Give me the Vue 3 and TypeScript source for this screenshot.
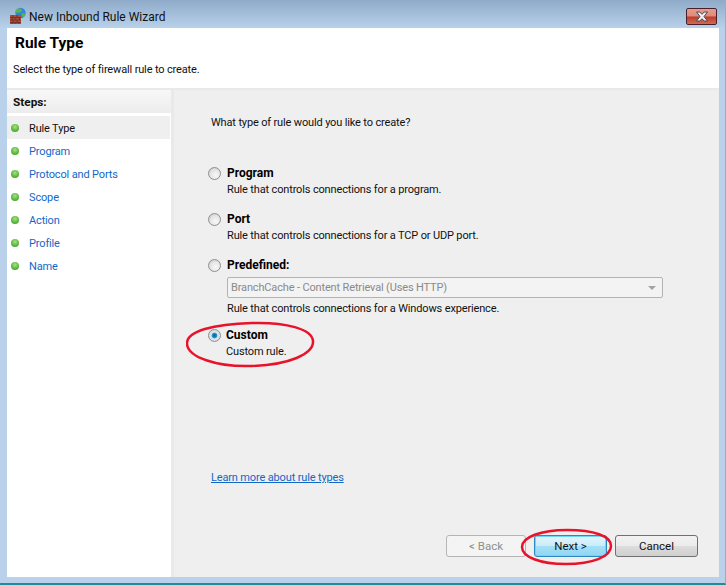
<template>
  <div class="window">
    <div class="titlebar">
      <svg class="app-icon" width="18" height="18" viewBox="0 0 18 18">
        <circle cx="11.5" cy="6" r="5.2" fill="#2f86d8" />
        <path d="M8 2.5c2-1.6 4.5-1 5 .5s-1.5 2.5-3 2.5-3 1-3.5-.5.5-1.8 1.500-2.500zM13 6.500c1.500-.5 3 0 3 1s-1 2.500-2 2.500-2-2.500-1-3.500z" fill="#5cb54a" />
        <path d="M1 8h11v9H1z" fill="#a8503c" />
        <path d="M1 10.500h11M1 13h11M1 15.500h11M4 8v2.500M8 8v2.500M10.500 10.500V13M6 10.500V13M3 10.500V13M4 13v2.500M8 13v2.500M3 15.500V17M6 15.500V17M10 15.500V17" stroke="#6e2a22" stroke-width="0.8" fill="none" />
      </svg>
      <span class="title-text">New Inbound Rule Wizard</span>
      <button class="close-btn" aria-label="Close">
        <svg width="14" height="11" viewBox="0 0 14 11">
          <path d="M1.500 1h3.300L7 3.300 9.200 1h3.300L9 5.500l3.500 4.500H9.200L7 7.700 4.800 10H1.500L5 5.500z" fill="#eef0f6" stroke="#4a4a55" stroke-width="1" />
        </svg>
      </button>
    </div>

    <div class="client">
      <header class="head">
        <h1>Rule Type</h1>
        <p>Select the type of firewall rule to create.</p>
      </header>

      <div class="main">
        <aside class="steps">
          <div class="steps-title">Steps:</div>
          <ul>
            <li v-for="(s, i) in steps" :key="s" :class="{ current: i === 0 }">
              <span class="dot"></span>
              <span class="step-label">{{ s }}</span>
            </li>
          </ul>
        </aside>

        <section class="content">
          <p class="question">What type of rule would you like to create?</p>

          <div class="options">
            <div v-for="o in options" :key="o.name" class="option" :class="o.cls">
              <span class="radio" :class="{ checked: o.checked }"></span>
              <div class="option-body">
                <div class="option-name">{{ o.name }}</div>
                <div v-if="o.select" class="select">
                  <span>{{ o.select }}</span>
                  <i class="arrow"></i>
                </div>
                <div class="option-desc">{{ o.desc }}</div>
              </div>
            </div>
            <svg class="ring ring-custom" width="131" height="49" viewBox="0 0 131 49">
              <path d="M66 3C100 2 126 9 127 21c1 13-24 24-62 25C30 47 2 37 1 24 0 11 28 4 66 3z" fill="none" stroke="#e8132a" stroke-width="2.500" />
            </svg>
          </div>

          <a class="learn">Learn more about rule types</a>

          <div class="buttons">
            <button class="btn" disabled>&lt; Back</button>
            <button class="btn primary">Next &gt;</button>
            <button class="btn cancel">Cancel</button>
            <svg class="ring ring-next" width="94" height="38" viewBox="0 0 94 38">
              <path d="M47 2C74 2 91 8 91 18c0 11-19 18-45 18C20 36 2 29 2 19 2 9 21 2 47 2z" fill="none" stroke="#e8132a" stroke-width="2.500" />
            </svg>
          </div>
        </section>
      </div>
    </div>
  </div>
</template>

<script setup lang="ts">
const steps = ['Rule Type', 'Program', 'Protocol and Ports', 'Scope', 'Action', 'Profile', 'Name']

interface RuleOption {
  name: string
  desc: string
  cls: string
  select?: string
  checked?: boolean
}

const options: RuleOption[] = [
  { name: 'Program', desc: 'Rule that controls connections for a program.', cls: 'opt-program' },
  { name: 'Port', desc: 'Rule that controls connections for a TCP or UDP port.', cls: 'opt-port' },
  {
    name: 'Predefined:',
    desc: 'Rule that controls connections for a Windows experience.',
    cls: 'opt-predefined',
    select: 'BranchCache - Content Retrieval (Uses HTTP)'
  },
  { name: 'Custom', desc: 'Custom rule.', cls: 'opt-custom', checked: true }
]
</script>

<style>
html,
body {
  margin: 0;
  background: #b9d1ea;
}
</style>

<style scoped>
.window {
  width: 726px;
  height: 585px;
  box-sizing: border-box;
  display: flex;
  flex-direction: column;
  overflow: hidden;
  padding: 0 6px 6px 7px;
  background: linear-gradient(180deg, #8fabc9 0, #b9d1ea 28px);
  border-right: 1px solid #5fc4e4;
  border-bottom: 2px solid #1f8c9c;
  font-family: Roboto, "Liberation Sans", sans-serif;
  font-size: 11px;
  letter-spacing: -0.15px;
  color: #111;
}

.titlebar {
  height: 28px;
  flex: none;
  display: flex;
  align-items: center;
  position: relative;
}

.app-icon {
  margin-left: 2px;
  margin-top: 3px;
}

.title-text {
  margin-left: 2px;
  margin-top: 6px;
  font-size: 12px;
  letter-spacing: 0;
  color: #111;
}

.close-btn {
  position: absolute;
  right: 2px;
  top: 8px;
  width: 31px;
  height: 17px;
  padding: 0;
  display: flex;
  align-items: center;
  justify-content: center;
  border: 1px solid #4a1f2a;
  border-radius: 2px;
  background: linear-gradient(180deg, #e79c8e 0, #dd8a7b 48%, #bb3c28 52%, #d26a55 100%);
}

.client {
  flex: 1;
  display: flex;
  flex-direction: column;
  min-height: 0;
  background: #fff;
}

.head {
  height: 60px;
  flex: none;
  box-sizing: border-box;
  padding-top: 6px;
  padding-left: 6px;
}

.head h1 {
  margin: 0 0 0 2px;
  font-size: 15.5px;
  letter-spacing: 0;
  line-height: 19px;
  font-weight: 700;
  color: #000;
}

.head p {
  margin: 9px 0 0;
  line-height: 16px;
}

.main {
  flex: 1;
  min-height: 0;
  display: flex;
  border-top: 2px solid #e9e9e9;
}

.steps {
  width: 167px;
  flex: none;
  box-sizing: border-box;
  border-right: 3px solid #e9e9e9;
  background: #fff;
}

.steps-title {
  height: 23px;
  box-sizing: border-box;
  padding: 4px 0 0 6px;
  font-size: 11.8px;
  letter-spacing: 0;
  line-height: 17px;
  font-weight: 700;
  color: #111;
  background: linear-gradient(180deg, #f8f8f8, #ececec);
}

.steps ul {
  list-style: none;
  margin: 3px 1px 0 0;
  padding: 0;
}

.steps li {
  height: 23px;
  display: flex;
  align-items: center;
  color: #1267c9;
}

.step-label {
  padding-top: 2px;
}

.steps li.current {
  background: #efefef;
  color: #111;
}

.dot {
  width: 8px;
  height: 8px;
  margin: 0 10px 0 4px;
  border-radius: 50%;
  background: radial-gradient(circle at 50% 35%, #a6e08a 0, #5fba3f 55%, #3b8f2b 100%);
}

.content {
  flex: 1;
  min-width: 0;
  display: flex;
  flex-direction: column;
  background: #efefef;
  padding-left: 34px;
}

.question {
  margin: 25px 0 0 3px;
  line-height: 16px;
}

.options {
  position: relative;
  margin-top: 34px;
  flex: 1;
}

.option {
  display: grid;
  grid-template-columns: 19px 1fr;
}

.opt-port,
.opt-predefined {
  margin-top: 14px;
}

.opt-custom {
  margin-top: 11px;
}

.opt-custom .option-body {
  margin-left: -1px;
}

.radio {
  width: 11px;
  height: 11px;
  margin-top: 2px;
  border: 1px solid #8e8f8f;
  border-radius: 50%;
  background: radial-gradient(circle at 60% 65%, #f8f8f8 0, #e6e6e6 50%, #c4c4c4 100%);
}

.radio.checked {
  background: radial-gradient(circle, #0c5f94 0, #1f8fcf 30%, #dfe6ea 42%, #cfd3d6 100%);
}

.option-name {
  font-size: 12px;
  letter-spacing: 0;
  font-weight: 700;
  line-height: 16px;
  color: #000;
}

.option-desc {
  height: 16px;
  box-sizing: border-box;
  padding-top: 1px;
  line-height: 16px;
  color: #111;
}

.select {
  width: 436px;
  height: 21px;
  margin-top: 4px;
  margin-bottom: 2px;
  box-sizing: border-box;
  display: flex;
  align-items: center;
  justify-content: space-between;
  padding: 0 6px 0 3px;
  border: 1px solid #b3b3b3;
  border-radius: 2px;
  background: #f3f3f3;
  color: #8a8a8a;
}

.arrow {
  width: 0;
  height: 0;
  border-left: 4px solid transparent;
  border-right: 4px solid transparent;
  border-top: 4px solid #a3a3a3;
}

.ring {
  position: absolute;
  pointer-events: none;
}

.ring-custom {
  left: -22px;
  top: 155px;
}

.learn {
  flex: none;
  margin-left: 3px;
  margin-bottom: 1px;
  line-height: 16px;
  color: #1267c9;
  text-decoration: underline;
}

.buttons {
  position: relative;
  flex: none;
  display: flex;
  justify-content: flex-end;
  height: 22px;
  margin-top: 48px;
  margin-bottom: 20px;
  padding-right: 21px;
}

.btn {
  width: 83px;
  height: 22px;
  box-sizing: border-box;
  padding: 0;
  border: 1px solid #707070;
  border-radius: 3px;
  font: inherit;
  font-size: 11.5px;
  color: #111;
  background: linear-gradient(180deg, #f2f2f2 0, #ebebeb 48%, #dddddd 52%, #cfcfcf 100%);
}

.btn:disabled {
  width: 80px;
  border-color: #b5b5b5;
  background: #f4f4f4;
  color: #8f8f8f;
}

.btn.primary {
  width: 73px;
  margin-left: 8px;
  border: 1px solid #2c88c0;
  box-shadow: inset 0 0 0 1px #6fd6f5;
  background: linear-gradient(180deg, #e4f5fc 0, #c9ecfa 48%, #a5dff7 52%, #8fd6f4 100%);
}

.btn.cancel {
  margin-left: 8px;
}

.ring-next {
  right: 105px;
  top: -7px;
}
</style>
